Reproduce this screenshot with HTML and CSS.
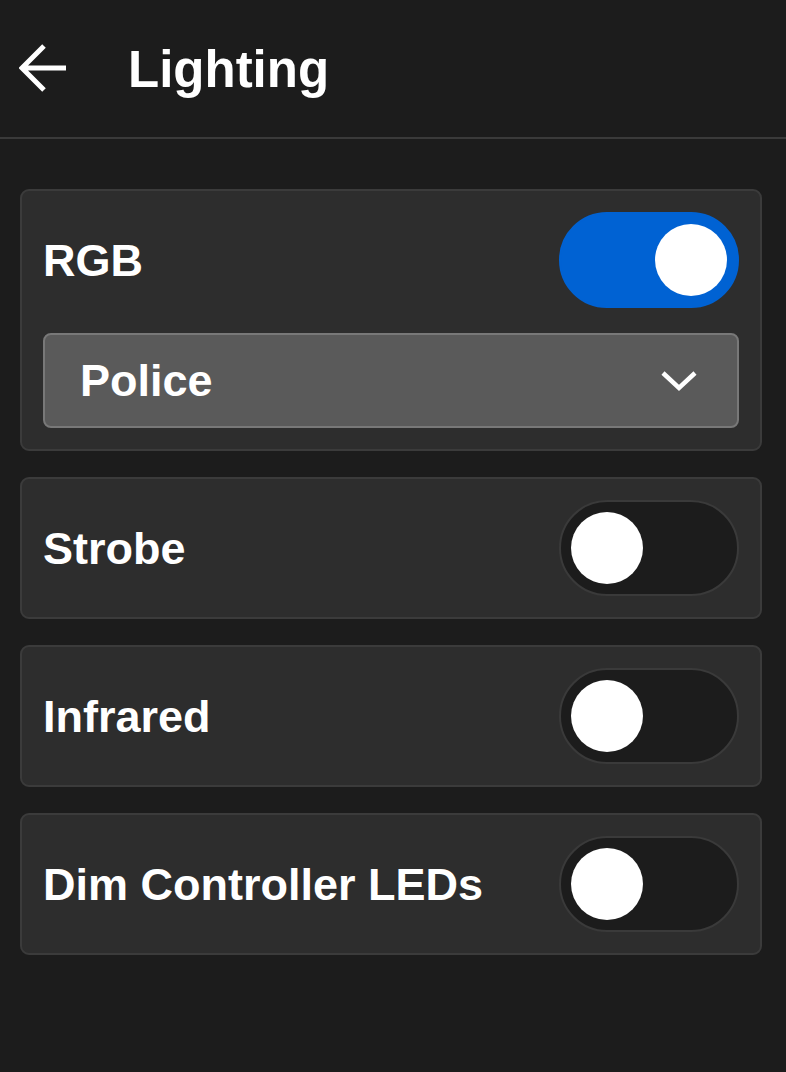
FILE: index.html
```html
<!DOCTYPE html>
<html>
<head>
<meta charset="utf-8">
<link rel="stylesheet" href="styles.css">
</head>
<body>
<header class="header">
  <svg class="back" width="50" height="50" viewBox="0 0 50 50">
    <path d="M47 25 H4 M25 3 L3 25 L25 47" fill="none" stroke="#fff" stroke-width="5" stroke-linecap="butt"/>
  </svg>
  <h1 class="title">Lighting</h1>
</header>
<main class="list">
  <section class="card">
    <div class="row">
      <span class="label">RGB</span>
      <div class="toggle on"><div class="knob"></div></div>
    </div>
    <div class="select">
      <span class="select-text">Police</span>
      <svg class="chev" width="38" height="24" viewBox="0 0 38 24">
        <path d="M3 4 L19 19 L35 4" fill="none" stroke="#fff" stroke-width="4.5"/>
      </svg>
    </div>
  </section>
  <section class="card">
    <div class="row">
      <span class="label">Strobe</span>
      <div class="toggle"><div class="knob"></div></div>
    </div>
  </section>
  <section class="card">
    <div class="row">
      <span class="label">Infrared</span>
      <div class="toggle"><div class="knob"></div></div>
    </div>
  </section>
  <section class="card">
    <div class="row">
      <span class="label">Dim Controller LEDs</span>
      <div class="toggle"><div class="knob"></div></div>
    </div>
  </section>
</main>
</body>
</html>
```
FILE: styles.css
```css
html, body {
  margin: 0;
  padding: 0;
  background: #1c1c1c;
  color: #fff;
  font-family: "Liberation Sans", Arial, sans-serif;
}
body {
  min-height: 1072px;
}
.header {
  height: 137px;
  border-bottom: 2px solid #3a3a3a;
  display: flex;
  align-items: center;
  padding-left: 19px;
  box-sizing: content-box;
}
.back {
  display: block;
  margin-top: -2px;
}
.title {
  margin: 2px 0 0 59px;
  font-size: 51px;
  font-weight: 700;
  line-height: 1;
}
.list {
  padding: 50px 24px 0 20px;
  display: flex;
  flex-direction: column;
  gap: 26px;
}
.card {
  background: #2d2d2d;
  border: 2px solid #3b3b3b;
  border-radius: 9px;
  padding: 21px;
  display: flex;
  flex-direction: column;
  gap: 25px;
}
.row {
  display: flex;
  align-items: center;
  justify-content: space-between;
}
.label {
  font-size: 45px;
  font-weight: 700;
  line-height: 1;
}
.toggle {
  width: 180px;
  height: 96px;
  box-sizing: border-box;
  border-radius: 48px;
  background: #1c1c1c;
  border: 2px solid #3a3a3a;
  display: flex;
  align-items: center;
  padding: 0 10px;
}
.toggle.on {
  background: #0062d3;
  border-color: #0062d3;
  justify-content: flex-end;
}
.knob {
  width: 72px;
  height: 72px;
  border-radius: 50%;
  background: #fff;
}
.select {
  height: 95px;
  box-sizing: border-box;
  background: #5a5a5a;
  border: 2px solid #787878;
  border-radius: 8px;
  display: flex;
  align-items: center;
  justify-content: space-between;
  padding: 0 39px 0 35px;
}
.select-text {
  font-size: 45px;
  font-weight: 700;
  line-height: 1;
}
.chev {
  display: block;
}
```
